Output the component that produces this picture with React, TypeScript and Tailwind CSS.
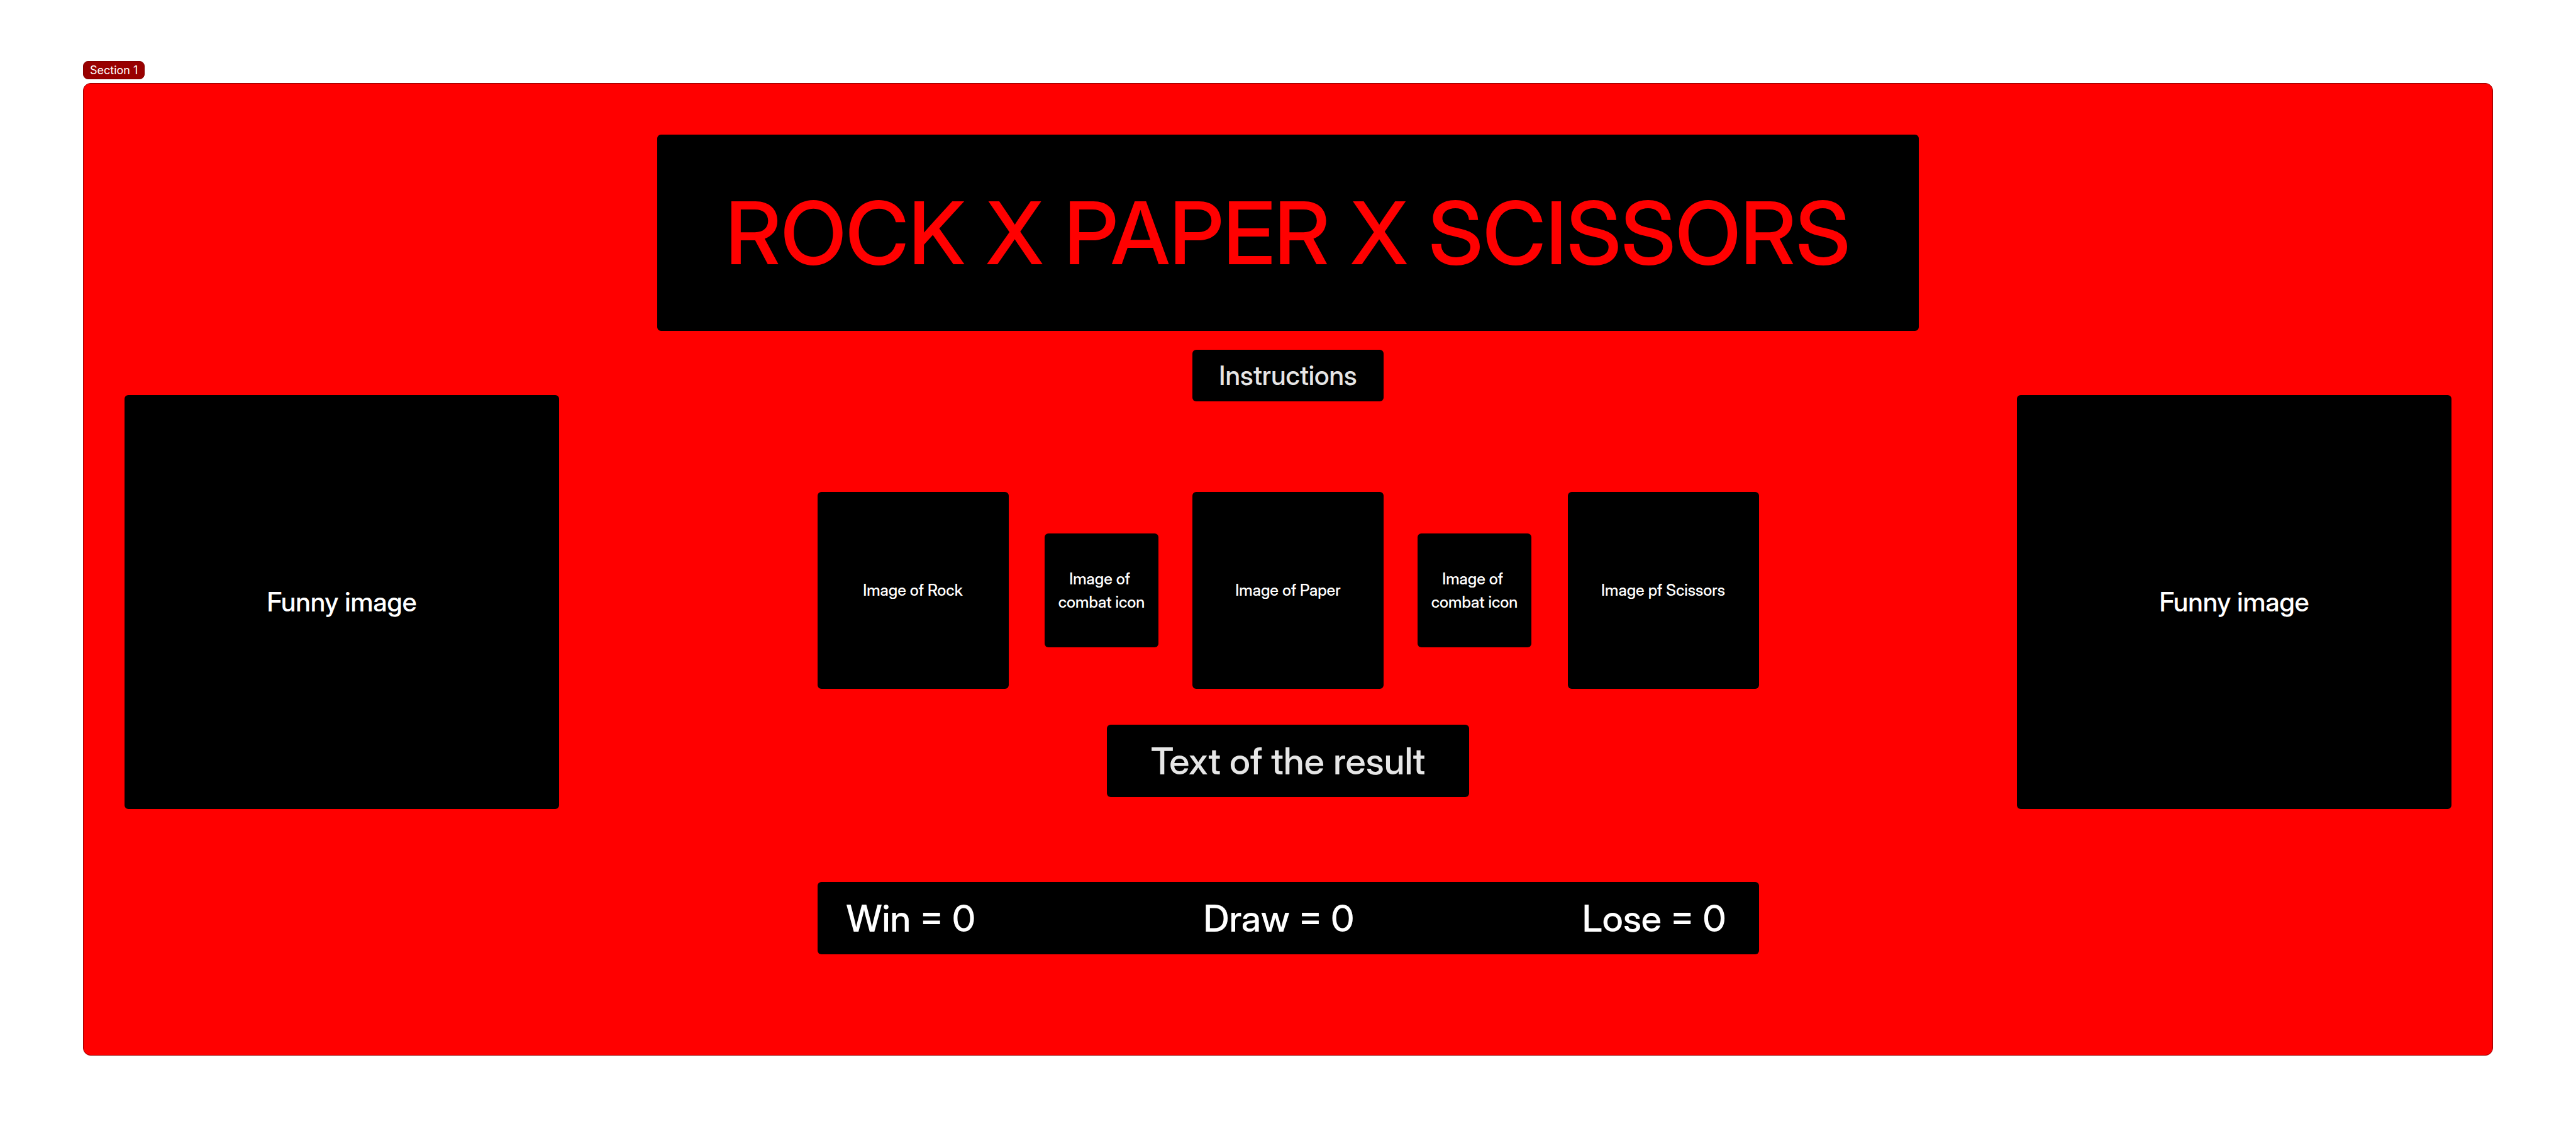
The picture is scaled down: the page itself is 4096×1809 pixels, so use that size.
import type { ReactNode } from "react";

function FunnyImage() {
  return (
    <div
      role="img"
      aria-label="Funny image"
      className="mt-[414px] flex h-[658px] w-[691px] items-center justify-center rounded-md bg-black text-[42px] leading-[62px] text-white"
    >
      Funny image
    </div>
  );
}

function Choice({ children }: { children: ReactNode }) {
  return (
    <button
      type="button"
      className="flex h-[313px] w-[304px] items-center justify-center rounded-md bg-black text-[25px] leading-[37px] font-medium text-white"
    >
      {children}
    </button>
  );
}

function CombatIcon() {
  return (
    <div
      role="img"
      aria-label="Image of combat icon"
      className="flex h-[181px] w-[181px] items-center justify-center rounded-md bg-black text-center text-[25px] leading-[37px] whitespace-pre text-white"
    >
      {"Image of \ncombat icon"}
    </div>
  );
}

export default function App() {
  return (
    <div className="bg-white px-[132px] pt-[97px] pb-[131px] font-['Inter_Display','Inter',sans-serif] font-medium">
      <div className="mb-[6px] flex w-fit items-center rounded-lg border border-[#850000] bg-[#990000] px-[10px] font-['Inter',sans-serif] text-[18px] leading-[27px] font-normal text-white">
        Section 1
      </div>

      <main className="flex items-start justify-between gap-[156px] rounded-xl border border-[#990000] bg-[#ff0000] px-[65px] pt-[81px] pb-[160px]">
        <FunnyImage />

        <div className="flex min-w-0 flex-1 flex-col items-center">
          <h1 className="flex h-[312px] w-full items-center justify-center rounded-md bg-black text-[138px] leading-[208px] font-medium whitespace-nowrap text-[#ff0000]">
            ROCK X PAPER X SCISSORS
          </h1>

          <p className="mt-[30px] flex h-[82px] w-[304px] items-center justify-center rounded-md bg-black text-[42px] leading-[62px] text-[#e6e6e6]">
            Instructions
          </p>

          <div className="mt-36 flex w-full max-w-[1497px] items-center justify-between">
            <Choice>Image of Rock</Choice>
            <div className="flex items-center gap-[54px]">
              <CombatIcon />
              <Choice>Image of Paper</Choice>
              <CombatIcon />
            </div>
            <Choice>Image pf Scissors</Choice>
          </div>

          <p className="mt-[57px] flex h-[115px] w-[576px] items-center justify-center rounded-md bg-black text-[59px] leading-[86px] text-[#e6e6e6]">
            Text of the result
          </p>

          <div className="mt-[135px] flex h-[115px] w-full max-w-[1497px] items-center justify-between rounded-md bg-black pr-[52px] pl-[46px] text-[59px] leading-[86px] text-white">
            <span>Win = 0</span>
            <span>Draw = 0</span>
            <span>Lose = 0</span>
          </div>
        </div>

        <FunnyImage />
      </main>
    </div>
  );
}
